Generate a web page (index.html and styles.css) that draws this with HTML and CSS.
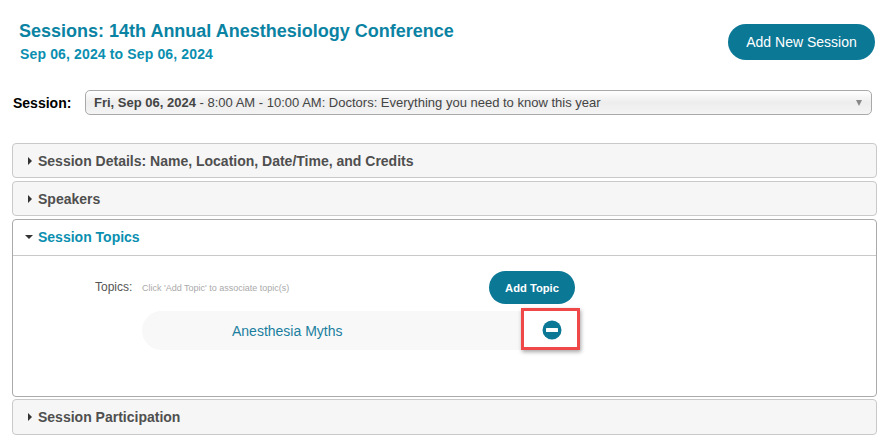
FILE: index.html
```html
<!DOCTYPE html>
<html lang="en">
<head>
    <meta charset="UTF-8">
    <title>Sessions</title>
    <link rel="stylesheet" href="styles.css">
</head>
<body>
    <div class="top">
        <div class="titles">
            <h1>Sessions: 14th Annual Anesthesiology Conference</h1>
            <h2>Sep 06, 2024 to Sep 06, 2024</h2>
        </div>
        <a class="btn btn-new">Add New Session</a>
    </div>
    <div class="session-row">
        <label>Session:</label>
        <div class="select">
            <span class="select-text"><b>Fri, Sep 06, 2024</b> - 8:00 AM - 10:00 AM: Doctors: Everything you need to know this year</span>
            <span class="select-arrow"></span>
        </div>
    </div>
    <div class="accordion">
        <div class="acc-head"><span class="tri"></span>Session Details: Name, Location, Date/Time, and Credits</div>
        <div class="acc-head"><span class="tri"></span>Speakers</div>
        <div class="acc-open">
            <div class="acc-open-head"><span class="tri-down"></span>Session Topics</div>
            <div class="acc-body">
                <div class="topics-row">
                    <span class="topics-label">Topics:</span>
                    <span class="topics-hint">Click 'Add Topic' to associate topic(s)</span>
                    <a class="btn btn-topic">Add Topic</a>
                </div>
                <div class="topic-item">
                    <span class="topic-pill">Anesthesia Myths</span>
                    <span class="topic-remove">
                        <svg width="20" height="20" viewBox="0 0 20 20"><circle cx="10" cy="10" r="9.5" fill="#0b7896"/><rect x="4" y="8" width="12" height="4" rx="0.5" fill="#fff"/></svg>
                        <span class="callout"></span>
                    </span>
                </div>
            </div>
        </div>
        <div class="acc-head acc-last"><span class="tri"></span>Session Participation</div>
    </div>
</body>
</html>
```

FILE: styles.css
```css
*{
    margin: 0;
    padding: 0;
    box-sizing: border-box;
}
body{
    background: #fff;
    font-family: "Liberation Sans", Arial, sans-serif;
    color: #454545;
}
.top{
    display: flex;
    justify-content: space-between;
    padding: 21px 15px 0 19px;
    height: 90px;
}
h1{
    font-size: 18px;
    line-height: 21px;
    font-weight: bold;
    color: #0b83a3;
}
h2{
    margin-top: 4px;
    margin-left: 1px;
    font-size: 14px;
    line-height: 16px;
    font-weight: bold;
    color: #0b8fb0;
    letter-spacing: 0.14px;
}
.btn{
    display: flex;
    align-items: center;
    justify-content: center;
    background: #0b7896;
    color: #fff;
}
.btn-new{
    width: 147px;
    height: 36px;
    margin-top: 3px;
    border-radius: 18px;
    font-size: 14px;
}
.session-row{
    display: flex;
    align-items: center;
    padding: 0 18px 0 13px;
    height: 25px;
}
.session-row label{
    width: 72px;
    font-size: 14px;
    font-weight: bold;
    color: #000;
}
.select{
    flex: 1;
    height: 25px;
    display: flex;
    align-items: center;
    justify-content: space-between;
    padding: 0 9px 0 8px;
    border: 1px solid #a9a9a9;
    border-radius: 5px;
    background: linear-gradient(#fff, #ededed 50%, #f4f4f4);
    font-size: 13px;
    color: #444;
}
.select-arrow{
    width: 0;
    height: 0;
    border-left: 3.5px solid transparent;
    border-right: 3.5px solid transparent;
    border-top: 6px solid #888;
}
.accordion{
    margin: 28px 13px 0 12px;
    display: flex;
    flex-direction: column;
    gap: 3px;
}
.acc-head{
    display: flex;
    align-items: center;
    height: 35px;
    padding-left: 15px;
    background: #f6f6f6;
    border: 1px solid #c9c9c9;
    border-radius: 4px;
    font-size: 14px;
    font-weight: bold;
    color: #4f4f4f;
}
.acc-last{
    height: 36px;
    margin-top: -1px;
}
.tri{
    width: 0;
    height: 0;
    margin-right: 6px;
    border-top: 4px solid transparent;
    border-bottom: 4px solid transparent;
    border-left: 4px solid #333;
}
.tri-down{
    width: 0;
    height: 0;
    margin-right: 5px;
    margin-left: -2px;
    border-left: 4px solid transparent;
    border-right: 4px solid transparent;
    border-top: 4px solid #333;
}
.acc-open{
    height: 178px;
    border: 1px solid #aaa;
    border-radius: 4px;
    background: #fff;
}
.acc-open-head{
    display: flex;
    align-items: center;
    height: 36px;
    padding: 0 0 2px 14px;
    border-bottom: 1px solid #c9c9c9;
    font-size: 14px;
    font-weight: bold;
    color: #0b8fb0;
}
.topics-row{
    display: flex;
    align-items: center;
    height: 33px;
    margin-top: 15px;
    padding-left: 82px;
}
.topics-label{
    width: 47px;
    padding-bottom: 2px;
    font-size: 12px;
    color: #555;
}
.topics-hint{
    width: 347px;
    font-size: 9px;
    color: #aaa;
}
.btn-topic{
    width: 86px;
    height: 33px;
    border-radius: 17px;
    font-size: 11.2px;
    font-weight: bold;
}
.topic-item{
    display: flex;
    align-items: flex-start;
    margin-top: 7px;
    margin-left: 129px;
}
.topic-pill{
    width: 380px;
    height: 39px;
    display: flex;
    align-items: center;
    padding-left: 90px;
    background: #f8f8f8;
    border-radius: 20px 0 0 20px;
    font-size: 14px;
    color: #1a7f9f;
}
.topic-remove{
    position: relative;
    display: flex;
    width: 20px;
    height: 20px;
    margin-left: 20px;
    margin-top: 9px;
}
/* red box pasted over the screenshot */
.callout{
    position: absolute;
    left: -21px;
    top: -12px;
    width: 59px;
    height: 42px;
    border: 3px solid #f04848;
    box-shadow: 1px 2px 4px rgba(0,0,0,0.35);
}
```
